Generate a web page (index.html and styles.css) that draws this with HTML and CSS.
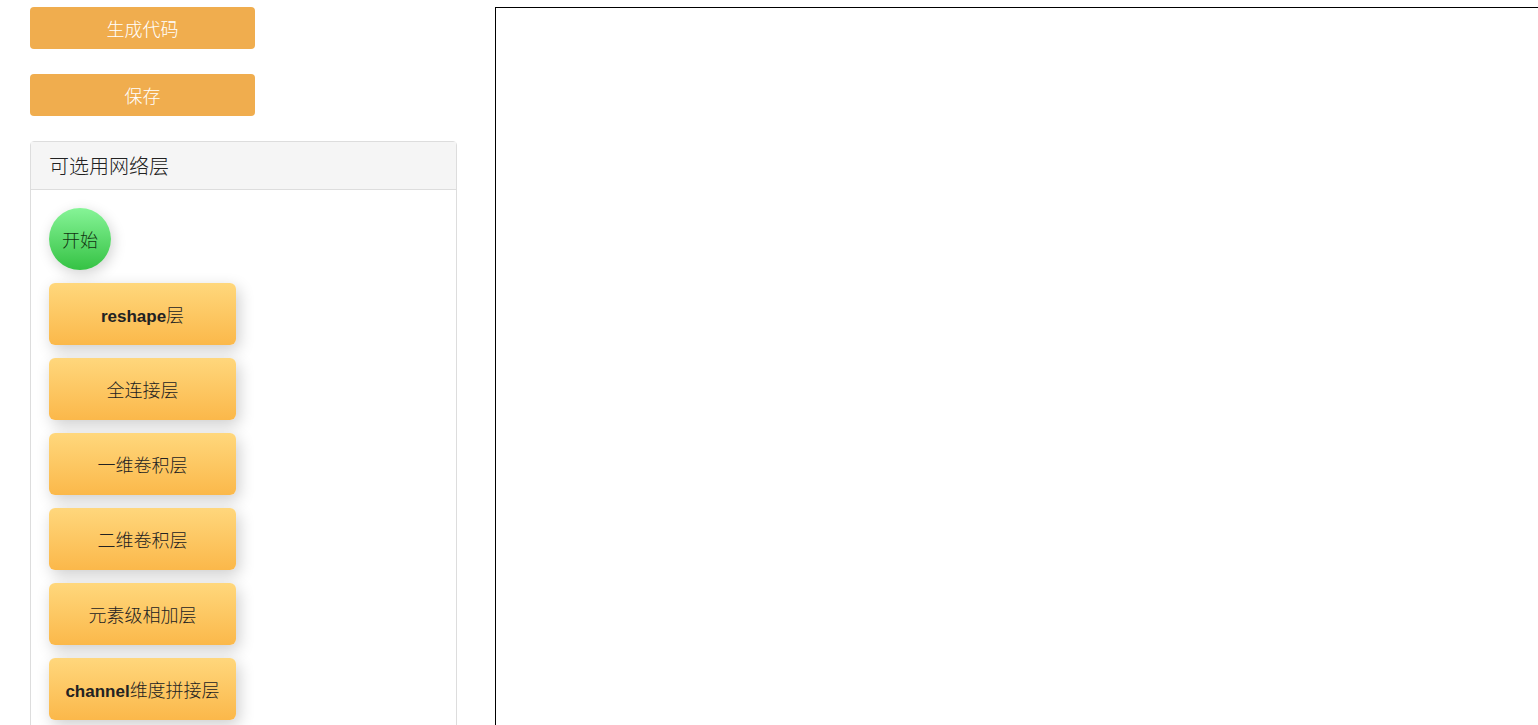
FILE: index.html
```html
<!DOCTYPE html>
<html lang="zh-CN">
<head>
    <meta charset="UTF-8">
    <title>网络层编辑器</title>
    <link rel="stylesheet" href="styles.css">
</head>
<body>
    <div class="layout">
        <div class="sidebar">
            <button class="btn-warning">生成代码</button>
            <button class="btn-warning">保存</button>

            <div class="panel">
                <div class="panel-heading">可选用网络层</div>
                <div class="panel-body">
                    <div class="node-start">开始</div>
                    <div class="node-layer"><span class="latin">reshape</span>层</div>
                    <div class="node-layer">全连接层</div>
                    <div class="node-layer">一维卷积层</div>
                    <div class="node-layer">二维卷积层</div>
                    <div class="node-layer">元素级相加层</div>
                    <div class="node-layer"><span class="latin">channel</span>维度拼接层</div>
                </div>
            </div>
        </div>

        <div class="canvas" id="canvas">
            <!-- layers get dropped here -->
        </div>
    </div>
</body>
</html>
```

FILE: styles.css
```css
html, body {
    margin: 0;
    overflow: hidden;
}
body {
    font-family: "Noto Sans CJK SC", "Liberation Sans", sans-serif;
    color: #333;
    background: #fff;
}
.layout {
    display: flex;
    align-items: flex-start;
    padding: 7px 0 0 30px;
}
.sidebar {
    width: 427px;
    flex-shrink: 0;
    display: flex;
    flex-direction: column;
    align-items: flex-start;
}
.btn-warning {
    width: 225px;
    height: 42px;
    margin-bottom: 25px;
    background-color: #f0ad4e;
    color: #fff;
    border: none;
    border-radius: 4px;
    font-family: inherit;
    font-size: 18px;
    font-weight: 300;
    padding: 0;
}
.panel {
    width: 100%;
    box-sizing: border-box;
    border: 1px solid #ddd;
    border-radius: 4px;
    height: 620px;
}
.panel-heading {
    background-color: #f5f5f5;
    border-bottom: 1px solid #ddd;
    height: 47px;
    line-height: 47px;
    padding-left: 18px;
    font-size: 20px;
    font-weight: 300;
    color: #222;
}
.panel-body {
    padding: 18px;
    display: flex;
    flex-direction: column;
    align-items: flex-start;
    gap: 13px;
}
.node-start {
    width: 62px;
    height: 62px;
    line-height: 62px;
    text-align: center;
    border-radius: 50%;
    background: linear-gradient(#86f497, #35c244);
    box-shadow: 2px 4px 14px rgba(0,0,0,0.18);
    font-size: 18px;
    font-weight: 300;
    color: #123312;
}
.node-layer {
    width: 187px;
    height: 62px;
    line-height: 62px;
    text-align: center;
    border-radius: 6px;
    background: linear-gradient(#ffd77c, #fbb84a);
    box-shadow: 3px 5px 16px rgba(0,0,0,0.2);
    font-size: 18px;
    font-weight: 300;
    color: #222;
}
.latin {
    font-family: "Liberation Sans", sans-serif;
    font-weight: bold;
    font-size: 17px;
}
.canvas {
    margin-left: 38px;
    width: 1200px;
    height: 760px;
    flex-shrink: 0;
    border: 1px solid #000;
}
```
